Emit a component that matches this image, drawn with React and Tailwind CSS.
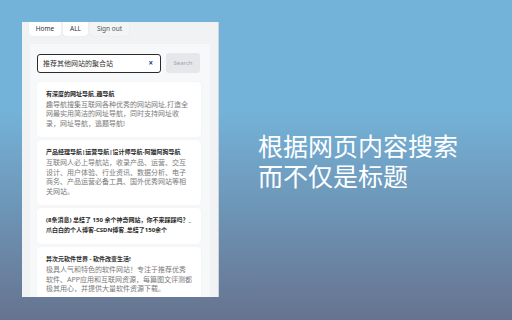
export default function App() {
  const cjk = { fontFamily: '"Noto Sans", "Noto Sans CJK SC", sans-serif' };
  const cards = [
    {
      title: "有深度的网址导航_趣导航",
      desc: "趣导航搜集互联网各种优秀的网站网址,打造全网最实用简洁的网址导航，同时支持网址收录，网址导航，逃题导航!",
    },
    {
      title: "产品经理导航|运营导航|设计师导航-阿猫阿狗导航",
      desc: "互联网人必上导航站，收录产品、运营、交互设计、用户体验、行业资讯、数据分析、电子商务、产品运营必备工具、国外优秀网站等相关网站。",
    },
    {
      title: (
        <>
          (8条消息) 总结了 150 余个神奇网站，你不来踩踩吗？_
          <br />
          爪白白的个人博客-CSDN博客_总结了150余个
        </>
      ),
    },
    {
      title: "异次元软件世界 - 软件改变生活!",
      desc: "极具人气和特色的软件网站！专注于推荐优秀软件、APP应用和互联网资源，每篇图文评测都极其用心，并提供大量软件资源下载。",
    },
  ];
  return (
    <div
      className="w-[512px] h-[320px] overflow-hidden flex items-start bg-[linear-gradient(to_bottom,#74b3d9_0%,#74b3d9_34%,#66738f_100%)]"
      style={cjk}
    >
      <div className="ml-[22px] mt-[22px] w-[197px] h-[275px] overflow-hidden bg-[#f1f2f4] border-r border-[#cfd2d8] flex flex-col">
        <div className="flex gap-[2px] pl-[7px] h-[14px]">
          <div className="w-[32px] h-[14px] bg-white rounded-b-[3px] shadow-[0_0_1px_rgba(0,0,0,0.15)] flex items-center justify-center text-[6.5px] text-[#333]">
            Home
          </div>
          <div className="w-[25px] h-[14px] bg-white rounded-b-[3px] shadow-[0_0_1px_rgba(0,0,0,0.15)] flex items-center justify-center text-[6.5px] text-[#333]">
            ALL
          </div>
          <div className="w-[39px] h-[14px] bg-[#f3f4f6] rounded-b-[3px] shadow-[0_0_1px_rgba(0,0,0,0.12)] flex items-center justify-center text-[6.5px] text-[#555]">
            Sign out
          </div>
        </div>
        <div className="mt-[8px] ml-[8px] mr-[8px] flex-1 bg-[#f7f8fa] pl-[7px] pr-[8px] pt-[9px] flex flex-col">
          <div className="flex items-center gap-[5px] h-[20px]">
            <div className="w-[124px] h-[19px] border border-[#2b2b2b] rounded-[3px] bg-white flex items-center pl-[5px] pr-[7px]">
              <span className="flex-1 text-[7px] text-[#333] leading-none">推荐其他网站的聚合站</span>
              <span className="text-[8px] font-bold text-[#1e3a8a] leading-none">×</span>
            </div>
            <div className="w-[34px] h-[20px] bg-[#e5e7eb] rounded-[3px] flex items-center justify-center text-[6px] text-[#9ca3af]">
              Search
            </div>
          </div>
          <div className="mt-[9px] flex flex-col gap-[3.5px]">
            {cards.map((c, i) => (
              <div
                key={i}
                className="w-[164px] bg-white rounded-[4px] shadow-[0_0_2px_rgba(0,0,0,0.06)] px-[9px] pt-[8px] pb-[8px]"
              >
                <div className="text-[6px] leading-[9.7px] font-bold text-[#2a2a2a]">{c.title}</div>
                {c.desc && (
                  <div className="text-[7px] leading-[9.7px] text-[#7a7a7a]">{c.desc}</div>
                )}
              </div>
            ))}
          </div>
        </div>
      </div>
      <div className="ml-[39px] mt-[131px] text-white text-[25px] leading-[30px] font-normal">
        <div>根据网页内容搜索</div>
        <div>而不仅是标题</div>
      </div>
    </div>
  );
}
